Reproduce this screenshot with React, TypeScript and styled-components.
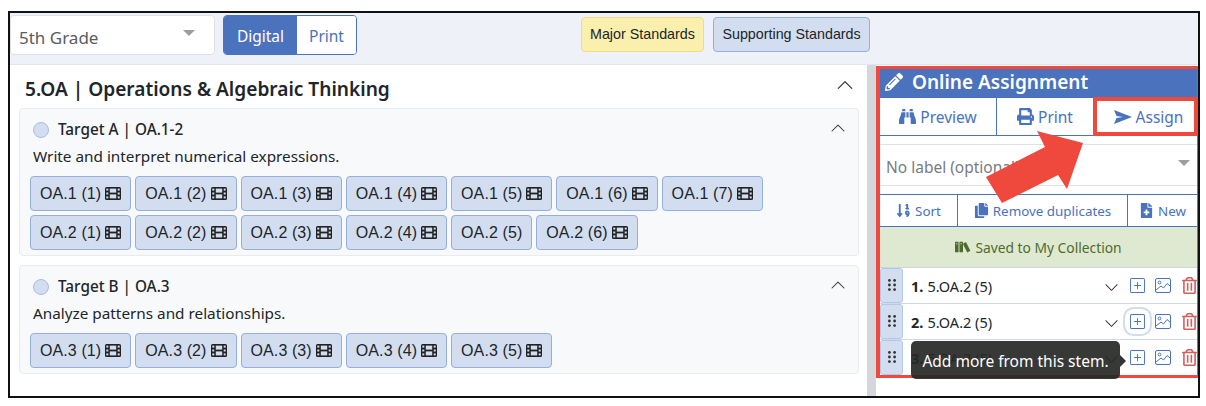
import React from "react";
import styled, { createGlobalStyle } from "styled-components";
import { BsChevronUp, BsChevronDown, BsPlusSquare } from "react-icons/bs";
import { FaBinoculars, FaPrint, FaPencilAlt, FaSortNumericDown, FaCopy, FaFileMedical, FaRegTrashAlt } from "react-icons/fa";
import { ImBooks } from "react-icons/im";

const Global = createGlobalStyle`
  html, body { margin: 0; padding: 0; background: #fff; }
  * { box-sizing: border-box; }
  body { font-family: "Noto Sans", "Open Sans", sans-serif; color: #212529; }
`;
const Frame = styled.div`
  position: relative; width: 1192px; height: 387px; margin: 11px 0 0 8px;
  border: 2px solid #111; display: flex; flex-direction: column; background: #fff; overflow: hidden;
`;
const TopBar = styled.div`
  height: 52px; flex: none; background: #eff1f8; border-bottom: 1px solid #e3e5ea;
  display: flex; align-items: flex-start; padding: 2px 0 0 0;
`;
const GradeSelect = styled.div`
  width: 205px; height: 40px; background: #fff; border: 1px solid #dee2e6; border-radius: 4px;
  display: flex; align-items: center; justify-content: space-between; padding: 4px 19px 0 8px;
  font-size: 17px; color: #595c5f;
`;
const Caret = styled.span`
  width: 0; height: 0; border-left: 6px solid transparent; border-right: 6px solid transparent;
  border-top: 6px solid #9a9da1; margin-top: -8px;
`;
const Toggle = styled.div`
  margin-left: 8px; height: 40px; width: 134px; display: flex; border: 1px solid #4a72bd; border-radius: 4px; overflow: hidden;
`;
const ToggleItem = styled.div<{ $on?: boolean }>`
  flex: ${p => (p.$on ? "0 0 73px" : "1")}; display: flex; align-items: center; justify-content: center;
  font-size: 15.5px; padding-top: 1px;
  background: ${p => (p.$on ? "#4a72bd" : "#fff")}; color: ${p => (p.$on ? "#fff" : "#4a72bd")};
`;
const Legend = styled.div<{ $kind: "major" | "support"; $left: number }>`
  margin: 2px 0 0 ${p => p.$left}px; height: 35px; display: flex; align-items: center; padding: 0 8.5px 1px 8px;
  font: 14.3px "Liberation Sans", Arial, sans-serif; border-radius: 4px; color: #212529;
  background: ${p => (p.$kind === "major" ? "#faefad" : "#d2deef")};
  border: 1px solid ${p => (p.$kind === "major" ? "#f1dc85" : "#94aedd")};
`;
const Body = styled.div`
  flex: 1; display: flex; min-height: 0;
`;
const Left = styled.div`
  width: 857px; flex: none; padding: 7px 8px 0 9px; background: #fff;
`;
const Heading = styled.div`
  display: flex; justify-content: space-between; align-items: center; height: 33px; padding: 0 5px 0 6px;
  margin-bottom: 3px; font-size: 19.1px; font-weight: 600; color: #212529;
`;
const HeadChevron = styled.span`
  display: flex; font-size: 18px; color: #333; margin-top: -8px;
`;
const Card = styled.div`
  background: #f8f9fb; border: 1px solid #e9ebef; border-radius: 4px; padding: 6px 11px 5px 10px; margin-bottom: 9px;
`;
const CardHead = styled.div`
  display: flex; align-items: center; height: 27px; padding-left: 3px;
  font-size: 15.3px; font-weight: 500;
`;
const Dot = styled.span`
  width: 16px; height: 16px; border-radius: 50%; background: #d2deef; border: 1px solid #a9bde3; margin: 2px 9px 0 0;
`;
const CardChevron = styled.span`
  margin-left: auto; display: flex; font-size: 16px; color: #333; margin-top: -2px; margin-right: 1px;
`;
const CardText = styled.div`
  font-size: 15.3px; padding-left: 3px; height: 26px; line-height: 28px; margin-bottom: 8px;
`;
const Chips = styled.div`
  display: flex; flex-wrap: wrap; gap: 4px;
`;
const Chip = styled.div`
  height: 35px; display: flex; align-items: center; gap: 4px; padding: 0 9px; background: #d2deef;
  border: 1px solid #94aedd; border-radius: 4px; font: 16px "Liberation Sans", Arial, sans-serif; color: #212529;
  letter-spacing: .1px;
`;
const Scroll = styled.div`
  width: 9px; flex: none; background: #d5d7dd;
`;
const Right = styled.div`
  flex: 1; display: flex; flex-direction: column; padding-top: 1px;
`;
const Panel = styled.div`
  height: 312px; border: 3px solid #ef483d; border-left-width: 4px; margin-right: 0; background: #fff;
  display: flex; flex-direction: column; overflow: hidden;
`;
const PanelHead = styled.div`
  height: 29px; flex: none; background: #4a72bd; color: #fff; display: flex; align-items: center; gap: 9px;
  padding: 0 0 4px 5px; font-size: 19px; font-weight: 600; svg { font-size: 18px; }
`;
const Tabs = styled.div`
  height: 38px; flex: none; display: flex; border-bottom: 1px solid #4a72bd;
`;
const Tab = styled.div<{ $w: number; $hot?: boolean }>`
  width: ${p => p.$w}px; flex: ${p => (p.$hot ? "1" : "none")}; display: flex; align-items: center; justify-content: center; gap: 4px;
  color: #4a72bd; font-size: 15.5px; border-right: ${p => (p.$hot ? "none" : "1px solid #4a72bd")};
  ${p => (p.$hot ? "outline: 4px solid #ef483d; outline-offset: -3px; padding-left: 6px;" : "")}
  svg { font-size: 17px; }
`;
const LabelSelect = styled.div`
  margin-top: 8px; height: 42px; flex: none; display: flex; align-items: center; justify-content: space-between;
  padding: 3px 7px 0 6px; border-top: 1px solid #dee2e6; border-bottom: 1px solid #dee2e6; font-size: 15.5px; color: #787b7f;
`;
const SortRow = styled.div`
  margin-top: 8px; height: 33px; flex: none; display: flex; border-top: 1px solid #4a72bd; border-bottom: 1px solid #4a72bd;
`;
const SortBtn = styled.div<{ $w: number; $last?: boolean }>`
  width: ${p => p.$w}px; flex: ${p => (p.$last ? "1" : "none")}; display: flex; align-items: center; justify-content: center; gap: 4px;
  color: #4a72bd; font-size: 13.4px; border-right: ${p => (p.$last ? "none" : "1px solid #4a72bd")};
  svg { font-size: 15px; }
`;
const Saved = styled.div`
  height: 41px; flex: none; background: #dfe9d1; display: flex; align-items: center; justify-content: center; gap: 4px;
  color: #4f6b2b; font-size: 13.8px; border-bottom: 1px solid #cdd5e4; svg { font-size: 16px; }
`;
const Row = styled.div`
  height: 36px; flex: none; display: flex; align-items: stretch; border-bottom: 1px solid #cfd9ec;
`;
const Grip = styled.div`
  width: 23px; flex: none; background: #d2deef; border: 1px solid #b5c7e8; border-radius: 3px; display: flex; align-items: flex-start;
  padding-top: 10px; justify-content: center; color: #333;
`;
const RowText = styled.div`
  flex: 1; font-size: 14.5px; padding-left: 8px; display: flex; align-items: center; gap: 4px; b { font-weight: 700; }
`;
const RowIcons = styled.div`
  display: flex; align-items: center; flex: none; gap: 10px; margin-right: -1px;
`;
const Down = styled.span`
  display: flex; font-size: 15px; color: #333; margin-top: 4px; margin-right: 1px;
`;
const Ico = styled.span<{ $c: string; $size: number; $focus?: boolean }>`
  display: flex; font-size: ${p => p.$size}px; color: ${p => p.$c}; border-radius: 4px;
  ${p => (p.$focus ? "box-shadow: 0 0 0 5px #fff, 0 0 0 7px #d2deef;" : "")}
`;
const Tooltip = styled.div`
  position: absolute; left: 901px; top: 328px; width: 209px; height: 38px; background: rgba(38, 40, 38, .92); color: #fff; border-radius: 5px;
  display: flex; align-items: center; justify-content: center; font-size: 15.5px; padding-top: 1px;
  &::after {
    content: ""; position: absolute; right: -6px; top: 14px; border-left: 6px solid #333533;
    border-top: 6px solid transparent; border-bottom: 6px solid transparent;
  }
`;
const ArrowSvg = styled.svg`
  position: absolute; left: 975px; top: 117px; pointer-events: none;
`;

const Film = () => (
  <svg width="16" height="13" viewBox="0 0 16 13">
    <rect width="16" height="13" rx="1.5" fill="#222" />
    <g fill="#d2deef">
      <rect x="1.3" y="1.6" width="2" height="2" />
      <rect x="1.3" y="5.5" width="2" height="2" />
      <rect x="1.3" y="9.4" width="2" height="2" />
      <rect x="12.7" y="1.6" width="2" height="2" />
      <rect x="12.7" y="5.5" width="2" height="2" />
      <rect x="12.7" y="9.4" width="2" height="2" />
      <rect x="4.8" y="1.6" width="6.4" height="4" />
      <rect x="4.8" y="7.4" width="6.4" height="4" />
    </g>
  </svg>
);

const Dots = () => (
  <svg width="8" height="12" viewBox="0 0 8 12" fill="#333">
    {[1.4, 6, 10.6].flatMap(y => [1.4, 6.6].map(x => <circle key={`${x}-${y}`} cx={x} cy={y} r="1.4" />))}
  </svg>
);

const Send = () => (
  <svg width="18" height="14" viewBox="0 0 18 14" fill="#4a72bd"><path d="M0 0 L18 7 L0 14 L2.5 8 L9 7 L2.5 6 Z" /></svg>
);

const Picture = () => (
  <svg width="16" height="15" viewBox="0 0 16 15" fill="none" stroke="#4a72bd" strokeWidth="1">
    <rect x=".5" y=".5" width="15" height="14" rx="1.5" />
    <circle cx="4.5" cy="4.5" r="1.4" />
    <path d="M1 12 L6 8 L8.5 10 L12 5.5 L15 8" />
  </svg>
);

const StemChip = ({ t, noFilm }: { t: string; noFilm?: boolean }) => <Chip>{t}{!noFilm && <Film />}</Chip>;

const StemRow = ({ n, focus }: { n: number; focus?: boolean }) => (
  <Row>
    <Grip><Dots /></Grip>
    <RowText><b>{n}.</b> 5.OA.2 (5)</RowText>
    <RowIcons>
      <Down><BsChevronDown /></Down>
      <Ico $c="#4a72bd" $size={15} $focus={focus}><BsPlusSquare /></Ico>
      <Ico $c="#4a72bd" $size={17}><Picture /></Ico>
      <Ico $c="#d0605c" $size={17}><FaRegTrashAlt /></Ico>
    </RowIcons>
  </Row>
);

export default function App() {
  return (
    <>
      <Global />
      <Frame>
        <TopBar>
          <GradeSelect>5th Grade<Caret /></GradeSelect>
          <Toggle>
            <ToggleItem $on>Digital</ToggleItem>
            <ToggleItem>Print</ToggleItem>
          </Toggle>
          <Legend $kind="major" $left={224}>Major Standards</Legend>
          <Legend $kind="support" $left={9}>Supporting Standards</Legend>
        </TopBar>
        <Body>
          <Left>
            <Heading>5.OA | Operations &amp; Algebraic Thinking<HeadChevron><BsChevronUp /></HeadChevron></Heading>
            <Card>
              <CardHead><Dot />Target A | OA.1-2<CardChevron><BsChevronUp /></CardChevron></CardHead>
              <CardText>Write and interpret numerical expressions.</CardText>
              <Chips>
                {[1, 2, 3, 4, 5, 6, 7].map(i => <StemChip key={i} t={`OA.1 (${i})`} />)}
                {[1, 2, 3, 4, 5, 6].map(i => <StemChip key={i} t={`OA.2 (${i})`} noFilm={i === 5} />)}
              </Chips>
            </Card>
            <Card>
              <CardHead><Dot />Target B | OA.3<CardChevron><BsChevronUp /></CardChevron></CardHead>
              <CardText>Analyze patterns and relationships.</CardText>
              <Chips>
                {[1, 2, 3, 4, 5].map(i => <StemChip key={i} t={`OA.3 (${i})`} />)}
              </Chips>
            </Card>
          </Left>
          <Scroll />
          <Right>
            <Panel>
              <PanelHead><FaPencilAlt />Online Assignment</PanelHead>
              <Tabs>
                <Tab $w={117}><FaBinoculars />Preview</Tab>
                <Tab $w={97}><FaPrint />Print</Tab>
                <Tab $w={100} $hot><Send />Assign</Tab>
              </Tabs>
              <LabelSelect>No label (optional)<Caret /></LabelSelect>
              <SortRow>
                <SortBtn $w={78}><FaSortNumericDown />Sort</SortBtn>
                <SortBtn $w={170}><FaCopy />Remove duplicates</SortBtn>
                <SortBtn $w={69} $last><FaFileMedical />New</SortBtn>
              </SortRow>
              <Saved><ImBooks />Saved to My Collection</Saved>
              <StemRow n={1} />
              <StemRow n={2} focus />
              <StemRow n={3} />
            </Panel>
          </Right>
        </Body>
        <Tooltip>Add more from this stem.</Tooltip>
        <ArrowSvg width="100" height="75" viewBox="0 0 100 75">
          <path fill="#ef483d" d="M1 47 L60 17 L52 1 L98 13 L82 59 L73 45 L17 73 Z" />
        </ArrowSvg>
      </Frame>
    </>
  );
}
